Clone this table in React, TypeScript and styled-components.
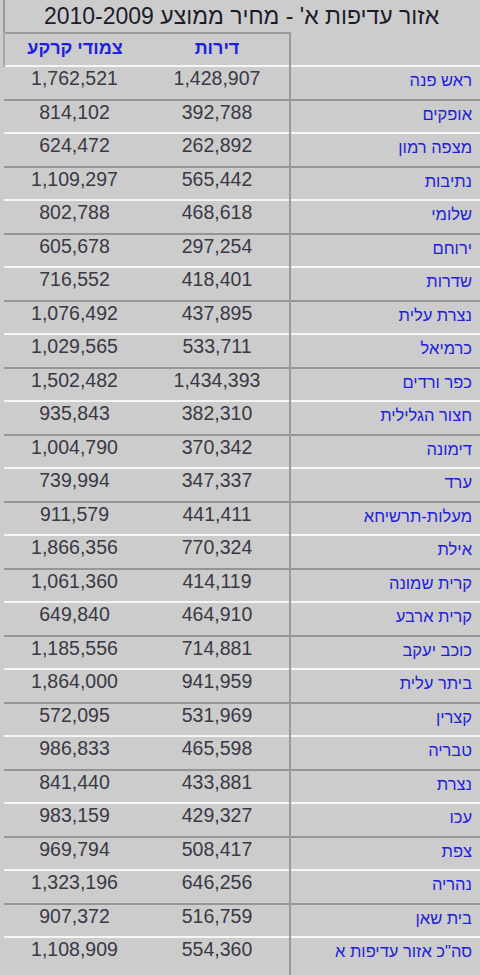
import { FC } from 'react'
import styled, { createGlobalStyle } from 'styled-components'

interface IRow {
  city: string
  flats: string
  houses: string
}

const rows: IRow[] = [
  { city: 'ראש פנה', flats: '1,428,907', houses: '1,762,521' },
  { city: 'אופקים', flats: '392,788', houses: '814,102' },
  { city: 'מצפה רמון', flats: '262,892', houses: '624,472' },
  { city: 'נתיבות', flats: '565,442', houses: '1,109,297' },
  { city: 'שלומי', flats: '468,618', houses: '802,788' },
  { city: 'ירוחם', flats: '297,254', houses: '605,678' },
  { city: 'שדרות', flats: '418,401', houses: '716,552' },
  { city: 'נצרת עלית', flats: '437,895', houses: '1,076,492' },
  { city: 'כרמיאל', flats: '533,711', houses: '1,029,565' },
  { city: 'כפר ורדים', flats: '1,434,393', houses: '1,502,482' },
  { city: 'חצור הגלילית', flats: '382,310', houses: '935,843' },
  { city: 'דימונה', flats: '370,342', houses: '1,004,790' },
  { city: 'ערד', flats: '347,337', houses: '739,994' },
  { city: 'מעלות-תרשיחא', flats: '441,411', houses: '911,579' },
  { city: 'אילת', flats: '770,324', houses: '1,866,356' },
  { city: 'קרית שמונה', flats: '414,119', houses: '1,061,360' },
  { city: 'קרית ארבע', flats: '464,910', houses: '649,840' },
  { city: 'כוכב יעקב', flats: '714,881', houses: '1,185,556' },
  { city: 'ביתר עלית', flats: '941,959', houses: '1,864,000' },
  { city: 'קצרין', flats: '531,969', houses: '572,095' },
  { city: 'טבריה', flats: '465,598', houses: '986,833' },
  { city: 'נצרת', flats: '433,881', houses: '841,440' },
  { city: 'עכו', flats: '429,327', houses: '983,159' },
  { city: 'צפת', flats: '508,417', houses: '969,794' },
  { city: 'נהריה', flats: '646,256', houses: '1,323,196' },
  { city: 'בית שאן', flats: '516,759', houses: '907,372' },
  { city: 'סה"כ אזור עדיפות א', flats: '554,360', houses: '1,108,909' },
]

const App: FC = () => {
  return (
    <>
      <GlobalStyle />
      <PageWrapper>
        <TitleBox>אזור עדיפות א' - מחיר ממוצע 2010-2009</TitleBox>
        <PriceTable>
          <colgroup>
            <col style={{ width: 190 }} />
            <col style={{ width: 145 }} />
            <col />
          </colgroup>
          <thead>
            <tr>
              <BlankHead />
              <HeadCell $first>דירות</HeadCell>
              <HeadCell>צמודי קרקע</HeadCell>
            </tr>
          </thead>
          <tbody>
            {rows.map((row, i) => (
              <BodyRow
                key={row.city}
                $light={i % 2 === 0}
                $last={i === rows.length - 1}
              >
                <CityCell>{row.city}</CityCell>
                <NumCell>{row.flats}</NumCell>
                <NumCell>{row.houses}</NumCell>
              </BodyRow>
            ))}
          </tbody>
        </PriceTable>
      </PageWrapper>
    </>
  )
}

export default App

const GlobalStyle = createGlobalStyle`
  html, body {
    margin: 0;
    padding: 0;
    background: #cccccc;
  }
  body {
    font-family: 'Liberation Sans', 'DejaVu Sans', Arial, sans-serif;
  }
`
const PageWrapper = styled.div`
  width: 480px;
  height: 975px;
  overflow: hidden;
  background: #cccccc;
  direction: rtl;
  padding-left: 3px;
  box-sizing: border-box;
`
const TitleBox = styled.div`
  height: 32px;
  box-sizing: border-box;
  border-left: 2px solid #9a9a9a;
  text-align: center;
  font-size: 23px;
  line-height: 33px;
  color: #1c1c2a;
  padding-right: 2px;
  white-space: nowrap;
`
const PriceTable = styled.table`
  width: 477px;
  border-collapse: collapse;
  table-layout: fixed;
  direction: rtl;
`
const BlankHead = styled.th`
  height: 32px;
  padding: 0;
  border-left: 2px solid #9a9a9a;
`
const HeadCell = styled.th<{ $first?: boolean }>`
  height: 32px;
  padding: 0 0 3px 0;
  box-sizing: border-box;
  border-top: 2px solid #9a9a9a;
  border-left: ${(p) => (p.$first ? 'none' : '2px solid #a8a8a8')};
  font-size: 18px;
  font-weight: bold;
  color: #2020e0;
  text-align: center;
  vertical-align: middle;
`
const BodyRow = styled.tr<{ $light: boolean; $last: boolean }>`
  height: ${(p) => (p.$last ? '48px' : '33.5px')};
  border-top: 2px solid ${(p) => (p.$light ? '#f6f6f6' : '#959595')};
  td {
    vertical-align: top;
  }
`
const CityCell = styled.td`
  padding: 1px 8px 0 0;
  text-align: right;
  font-size: 16.5px;
  line-height: 24px;
  color: #1e1edc;
  border-left: 2px solid #9a9a9a;
  white-space: nowrap;
`
const NumCell = styled.td`
  padding: 0;
  text-align: center;
  font-size: 19.5px;
  line-height: 22px;
  color: #3a3844;
`
